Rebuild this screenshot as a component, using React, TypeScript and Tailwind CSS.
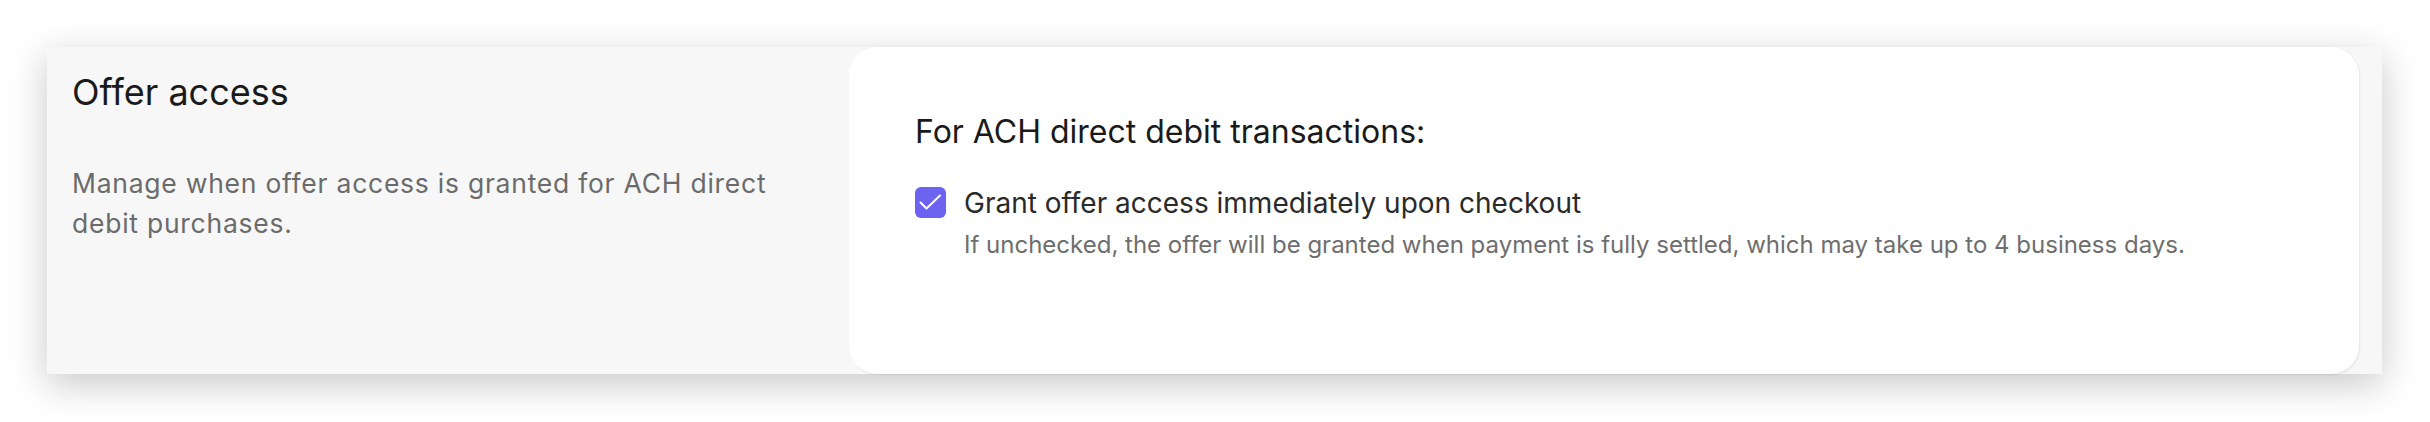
import React from 'react'

const CheckIcon = () => (
  <svg viewBox="0 0 31 31" className="w-[31px] h-[31px]" fill="none" stroke="white" strokeWidth="2" strokeLinecap="round" strokeLinejoin="round">
    <path d="M5.5 15.5l6 6L25 8.5" />
  </svg>
)

const App = () => {
  return (
    <div className="min-h-screen bg-white pt-[47px] pl-[47px] font-['Inter',sans-serif]">
      <section className="flex w-[2335px] h-[327px] bg-[#f7f7f7] shadow-[0_10px_36px_rgba(0,0,0,0.22)]">
        <div className="w-[802px] pl-[25px] pt-[23px] pr-[40px]">
          <h2 className="text-[36px] leading-[44px] text-[#1a1a1a]">Offer access</h2>
          <p className="mt-[49px] text-[26.5px] leading-[40px] tracking-[0.75px] text-[#6b6b6b] max-w-[730px]">
            Manage when offer access is granted for ACH direct debit purchases.
          </p>
        </div>
        <div className="flex-1 mr-[23px] bg-white rounded-[28px] shadow-[1px_1px_2px_rgba(0,0,0,0.08)] pl-[66px] pt-[65px]">
          <h3 className="text-[32px] leading-[40px] text-[#1a1a1a]">For ACH direct debit transactions:</h3>
          <div className="mt-[33px] flex items-start gap-[18px]">
            <div className="mt-[2px] w-[31px] h-[31px] shrink-0 rounded-[6px] bg-[#6c63f1] flex items-center justify-center">
              <CheckIcon />
            </div>
            <div>
              <p className="text-[28px] leading-[36px] text-[#2a2a2a]">Grant offer access immediately upon checkout</p>
              <p className="mt-[8px] text-[24px] leading-[32px] text-[#6e6e6e]">
                If unchecked, the offer will be granted when payment is fully settled, which may take up to 4 business days.
              </p>
            </div>
          </div>
        </div>
      </section>
    </div>
  )
}

export default App
